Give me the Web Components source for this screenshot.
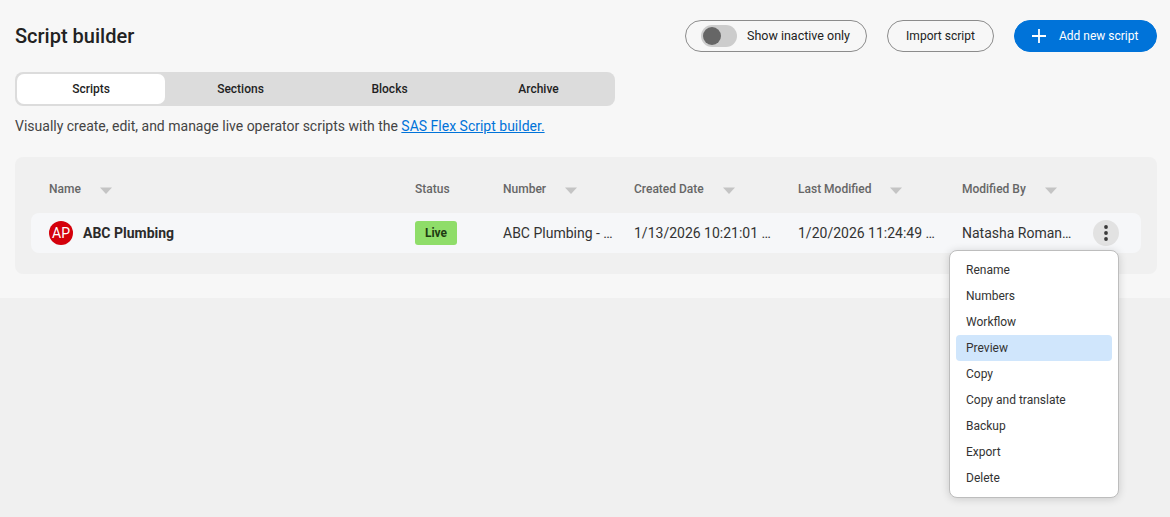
<!DOCTYPE html>
<html lang="en">
<head>
<meta charset="utf-8">
<title>Script builder</title>
<style>
	html, body {
		margin: 0;
		height: 100%;
		background: #f0f0f0;
		font-family: Roboto, "Liberation Sans", sans-serif;
		color: #2b2b2b;
	}
</style>
</head>
<body>
<script-builder-page></script-builder-page>

<script>
class PillButton extends HTMLElement {
	constructor() {
		super();
		this.attachShadow({ mode: "open" });
		this.shadowRoot.innerHTML = /* html */`
		<style>
		:host {
			display: inline-flex;
			align-items: center;
			box-sizing: border-box;
			height: 32px;
			border: 1px solid #8c8c8c;
			border-radius: 16px;
			font-size: 12px;
			color: #222;
			white-space: nowrap;
		}
		:host([primary]) {
			background: #0073d9;
			border-color: #0073d9;
			color: #fff;
		}
		.label {
			margin-top: -1px;
		}
		</style>
		<slot name="icon"></slot>
		<span class="label"><slot></slot></span>
		`;
	}
}
customElements.define("pill-button", PillButton);

class ScriptTabs extends HTMLElement {
	constructor() {
		super();
		this.attachShadow({ mode: "open" });
		this.shadowRoot.innerHTML = /* html */`
		<style>
		:host {
			display: grid;
			grid-template-columns: repeat(4, 1fr);
			box-sizing: border-box;
			width: 600px;
			height: 34px;
			padding: 2px;
			background: #dcdcdc;
			border-radius: 8px;
			font-size: 12px;
			font-weight: 500;
			color: #1f1f1f;
		}
		div {
			display: flex;
			align-items: center;
			justify-content: center;
			padding-bottom: 1px;
			border-radius: 7px;
		}
		.active {
			margin-right: 1px;
			background: #fff;
		}
		</style>
		<div class="active">Scripts</div>
		<div>Sections</div>
		<div>Blocks</div>
		<div>Archive</div>
		`;
	}
}
customElements.define("script-tabs", ScriptTabs);

class ScriptMenu extends HTMLElement {
	constructor() {
		super();
		this.attachShadow({ mode: "open" });
		const items = ["Rename", "Numbers", "Workflow", "Preview", "Copy", "Copy and translate", "Backup", "Export", "Delete"];
		const rows = items.map((item) => `<div class="${item === "Preview" ? "hover" : ""}">${item}</div>`).join("");
		this.shadowRoot.innerHTML = /* html */`
		<style>
		:host {
			position: absolute;
			left: 949px;
			top: 250px;
			box-sizing: border-box;
			width: 170px;
			height: 248px;
			padding: 6px 6px;
			background: #fff;
			border: 1px solid #bdbdbd;
			border-radius: 8px;
			box-shadow: 0 1px 8px rgba(0, 0, 0, .16);
			font-size: 12px;
			color: #333;
			z-index: 2;
		}
		div {
			display: flex;
			align-items: center;
			box-sizing: border-box;
			height: 26px;
			padding-left: 10px;
			border-radius: 4px;
		}
		.hover {
			background: #d0e6fc;
		}
		</style>
		${rows}
		`;
	}
}
customElements.define("script-menu", ScriptMenu);

class ScriptTable extends HTMLElement {
	constructor() {
		super();
		this.attachShadow({ mode: "open" });
		const caret = `<svg width="12" height="7" viewBox="0 0 12 7"><path d="M0 0.5h12L6 7z" fill="#c4c4c4"/></svg>`;
		this.shadowRoot.innerHTML = /* html */`
		<style>
		:host {
			display: block;
			box-sizing: border-box;
			height: 117px;
			padding: 0 16px;
			background: #f0f0f0;
			border-radius: 8px;
		}
		.cols {
			display: grid;
			grid-template-columns: 366px 88px 131px 164px 164px 131px 26px;
			padding-left: 18px;
		}
		.head {
			box-sizing: border-box;
			height: 56px;
			padding-top: 7px;
			align-items: center;
			font-size: 12px;
			font-weight: 500;
			color: #666;
		}
		.head span {
			display: flex;
			align-items: center;
			gap: 19px;
		}
		.head svg {
			margin-top: 3px;
		}
		.row {
			height: 40px;
			align-items: center;
			background: #f6f7f9;
			border-radius: 8px;
			font-size: 14px;
			color: #333;
		}
		.name {
			display: flex;
			align-items: center;
			gap: 10px;
			font-weight: 700;
			color: #2b2b2b;
		}
		.avatar {
			display: flex;
			align-items: center;
			justify-content: center;
			width: 24px;
			height: 24px;
			border-radius: 50%;
			background: #d4000b;
			color: #fff;
			font-size: 14px;
			font-weight: 400;
		}
		.live {
			display: flex;
			align-items: center;
			justify-content: center;
			width: 42px;
			height: 24px;
			border-radius: 3px;
			background: #8fdd69;
			color: #1f3a12;
			font-size: 12px;
			font-weight: 700;
		}
		.clip {
			white-space: nowrap;
		}
		.more {
			display: flex;
			align-items: center;
			justify-content: center;
			width: 26px;
			height: 26px;
			border-radius: 50%;
			background: #e2e2e2;
		}
		</style>
		<div class="cols head">
			<span>Name ${caret}</span>
			<span>Status</span>
			<span>Number ${caret}</span>
			<span>Created Date ${caret}</span>
			<span>Last Modified ${caret}</span>
			<span>Modified By ${caret}</span>
			<span></span>
		</div>
		<div class="cols row">
			<div class="name"><span class="avatar">AP</span>ABC Plumbing</div>
			<div><span class="live">Live</span></div>
			<div class="clip">ABC Plumbing - …</div>
			<div class="clip">1/13/2026 10:21:01 …</div>
			<div class="clip">1/20/2026 11:24:49 …</div>
			<div class="clip">Natasha Roman…</div>
			<div class="more">
				<svg width="4" height="16" viewBox="0 0 4 16"><circle cx="2" cy="2" r="1.9" fill="#3a3a3a"/><circle cx="2" cy="8" r="1.9" fill="#3a3a3a"/><circle cx="2" cy="14" r="1.9" fill="#3a3a3a"/></svg>
			</div>
		</div>
		`;
	}
}
customElements.define("script-table", ScriptTable);

class ScriptBuilderPage extends HTMLElement {
	constructor() {
		super();
		this.attachShadow({ mode: "open" });
		this.shadowRoot.innerHTML = /* html */`
		<style>
		:host {
			display: block;
			box-sizing: border-box;
			height: 298px;
			padding: 20px 13px 0 15px;
			background: #f7f7f7;
		}
		header {
			display: flex;
			align-items: center;
			height: 32px;
			gap: 20px;
		}
		h1 {
			margin: 0 auto 0 0;
			font-size: 20px;
			font-weight: 500;
			color: #222;
		}
		.toggle {
			width: 182px;
			padding-left: 15px;
			gap: 10px;
			font-size: 12.5px;
		}
		.track {
			position: relative;
			width: 36px;
			height: 22px;
			border-radius: 11px;
			background: #cccccc;
		}
		.knob {
			position: absolute;
			left: 2px;
			top: 2px;
			width: 18px;
			height: 18px;
			border-radius: 50%;
			background: #666;
		}
		.import {
			width: 107px;
			justify-content: center;
		}
		.add {
			width: 143px;
			padding-left: 17px;
			gap: 13px;
		}
		script-tabs {
			margin-top: 20px;
		}
		p {
			margin: 12px 0 0;
			height: 17px;
			line-height: 17px;
			font-size: 14px;
			color: #444;
		}
		a {
			color: #0073d9;
		}
		script-table {
			margin-top: 22px;
		}
		</style>
		<header>
			<h1>Script builder</h1>
			<pill-button class="toggle"><span class="track" slot="icon"><span class="knob"></span></span>Show inactive only</pill-button>
			<pill-button class="import">Import script</pill-button>
			<pill-button class="add" primary>
				<svg slot="icon" width="14" height="14" viewBox="0 0 14 14" style="display:block"><path d="M7 0v14M0 7h14" stroke="#fff" stroke-width="1.8"/></svg>
				Add new script
			</pill-button>
		</header>
		<script-tabs></script-tabs>
		<p>Visually create, edit, and manage live operator scripts with the <a href="#">SAS Flex Script builder.</a></p>
		<script-table></script-table>
		<script-menu></script-menu>
		`;
	}
}
customElements.define("script-builder-page", ScriptBuilderPage);
</script>
</body>
</html>
